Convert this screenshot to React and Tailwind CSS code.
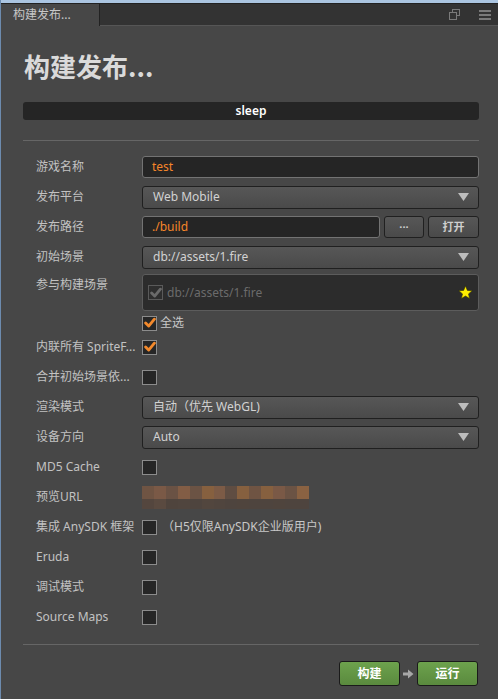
import React from "react";

const font = { fontFamily: '"Noto Sans", "Noto Sans CJK SC", sans-serif' };

function Check({ checked, disabled }) {
  return (
    <div
      className={
        "w-[15px] h-[15px] border flex items-center justify-center shrink-0 " +
        (disabled ? "border-[#5a5a5a] bg-[#2e2e2e]" : "border-[#8c8c8c] bg-[#262626]")
      }
    >
      {checked && (
        <svg width="12" height="12" viewBox="0 0 11 11">
          <path
            d="M1.5 5.5 L4.3 8.3 L9.5 2"
            fill="none"
            stroke={disabled ? "#6a6a6a" : "#f2892c"}
            strokeWidth="2.6"
            strokeLinecap="round"
            strokeLinejoin="round"
          />
        </svg>
      )}
    </div>
  );
}

function Row({ label, children }) {
  return (
    <div className="flex items-center h-[30px]">
      <div className="w-[119px] pl-[13px] text-[12px] text-[#c2c2c2] whitespace-nowrap">{label}</div>
      <div className="flex-1 flex items-center">{children}</div>
    </div>
  );
}

function Select({ value }) {
  return (
    <div className="flex-1 h-[23px] rounded-[3px] border border-[#202020] bg-gradient-to-b from-[#575757] to-[#4a4a4a] flex items-center pl-[10px] pr-[9px] text-[12px] text-[#d2d2d2]">
      <span className="flex-1">{value}</span>
      <svg width="11" height="8" viewBox="0 0 11 8">
        <path d="M0 0 H11 L5.5 8 Z" fill="#bdbdbd" />
      </svg>
    </div>
  );
}

function Input({ value, className = "flex-1" }) {
  return (
    <div className={className + " h-[22px] rounded-[3px] border border-[#737373] bg-[#252525] flex items-center pl-[9px] text-[12px] text-[#f5852a]"}>
      {value}
    </div>
  );
}

const top = ["#6f5443", "#7a5946", "#6a5244", "#825d45", "#6b5344", "#86603f", "#7c5b46", "#5f4d42", "#86603f", "#6f5443", "#86603f", "#7a5946", "#6b5344", "#8a6242"];
const bottom = ["#54463e", "#5a4a40", "#4f443d", "#50453e", "#4e443e", "#52463e", "#50453e", "#4e443e", "#4f443d", "#4e443e", "#4e443e", "#4f443d", "#4e443e", "#4e443e"];

export default function App() {
  return (
    <div className="w-[498px] h-[699px] bg-[#474747] flex flex-col overflow-hidden border-l border-[#6d8bae]" style={font}>
      <div className="h-[3px] bg-[#abc5e1] shrink-0" />
      <div className="h-[23px] bg-[#333333] flex items-stretch shrink-0 border-t border-[#222]">
        <div className="w-[99px] bg-[#474747] border-r border-[#222] text-[12px] text-[#c8c8c8] pl-[12px] flex items-center">
          构建发布...
        </div>
        <div className="flex-1 border-b border-[#565656] flex items-center justify-end pr-[7px] gap-[19px]">
          <svg width="11" height="11" viewBox="0 0 11 11">
            <rect x="3.5" y="0.5" width="7" height="6" fill="none" stroke="#7a7a7a" />
            <rect x="0.5" y="3.5" width="7" height="7" fill="#333" stroke="#7a7a7a" />
          </svg>
          <svg width="12" height="10" viewBox="0 0 12 10">
            <rect x="0" y="0" width="12" height="2" fill="#7a7a7a" />
            <rect x="0" y="4" width="12" height="2" fill="#7a7a7a" />
            <rect x="0" y="8" width="12" height="2" fill="#7a7a7a" />
          </svg>
        </div>
      </div>

      <div className="pl-[22px] pr-[19px] flex flex-col">
        <div className="mt-[25px] h-[30px] leading-[30px] text-[26px] font-bold text-[#dadada] pl-[1px]" style={{ fontFamily: '"Noto Sans CJK SC", sans-serif' }}>
          构建发布...
        </div>
        <div className="mt-[21px] h-[18px] rounded-[3px] bg-[#252525] flex items-center justify-center text-[12px] font-semibold text-white">
          sleep
        </div>
        <div className="mt-[20px] h-px bg-[#666]" />

        <div className="mt-[11px] flex flex-col">
          <Row label="游戏名称">
            <Input value="test" />
          </Row>
          <Row label="发布平台">
            <Select value="Web Mobile" />
          </Row>
          <Row label="发布路径">
            <Input value="./build" className="w-[238px]" />
            <div className="ml-[4px] w-[40px] h-[22px] rounded-[3px] border border-[#202020] bg-gradient-to-b from-[#575757] to-[#4a4a4a] flex items-center justify-center text-[11px] font-bold text-[#cfcfcf]">
              ···
            </div>
            <div className="ml-[4px] w-[51px] h-[22px] rounded-[3px] border border-[#202020] bg-gradient-to-b from-[#575757] to-[#4a4a4a] flex items-center justify-center text-[11px] font-bold text-[#cfcfcf]">
              打开
            </div>
          </Row>
          <Row label="初始场景">
            <Select value="db://assets/1.fire" />
          </Row>

          <div className="flex h-[60px]">
            <div className="w-[119px] pl-[13px] pt-[4px] text-[12px] text-[#c2c2c2] leading-[18px]">参与构建场景</div>
            <div className="flex-1 flex flex-col">
              <div className="mt-[2px] h-[37px] rounded-[3px] border border-[#5c5c5c] bg-[#2c2c2c] flex items-center pl-[5px] pr-[5px]">
                <Check checked disabled />
                <span className="ml-[4px] text-[12px] text-[#6b6b6b] flex-1">db://assets/1.fire</span>
                <svg width="15" height="15" viewBox="0 0 24 24">
                  <path d="M12 1.5 L15 8.6 L22.6 9.2 L16.8 14.2 L18.6 21.7 L12 17.7 L5.4 21.7 L7.2 14.2 L1.4 9.2 L9 8.6 Z" fill="#ffee00" stroke="#3a3a00" strokeWidth="1" />
                </svg>
              </div>
              <div className="mt-[3px] flex items-center">
                <Check checked />
                <span className="ml-[3px] text-[12px] text-[#c8c8c8]">全选</span>
              </div>
            </div>
          </div>

          <Row label="内联所有 SpriteF...">
            <Check checked />
          </Row>
          <Row label="合并初始场景依...">
            <Check />
          </Row>
          <Row label="渲染模式">
            <Select value="自动（优先 WebGL)" />
          </Row>
          <Row label="设备方向">
            <Select value="Auto" />
          </Row>
          <Row label="MD5 Cache">
            <Check />
          </Row>
          <Row label="预览URL">
            <div className="w-[167px] h-[23px] flex flex-col">
              <div className="flex h-[13px]">
                {top.map((c, i) => (
                  <div key={i} className="flex-1" style={{ backgroundColor: c }} />
                ))}
              </div>
              <div className="flex h-[10px]">
                {bottom.map((c, i) => (
                  <div key={i} className="flex-1" style={{ backgroundColor: c }} />
                ))}
              </div>
            </div>
          </Row>
          <Row label="集成 AnySDK 框架">
            <Check />
            <span className="ml-[5px] text-[12px] text-[#c8c8c8]">（H5仅限AnySDK企业版用户)</span>
          </Row>
          <Row label="Eruda">
            <Check />
          </Row>
          <Row label="调试模式">
            <Check />
          </Row>
          <Row label="Source Maps">
            <Check />
          </Row>
        </div>

        <div className="mt-[12px] h-px bg-[#666]" />

        <div className="mt-[16px] flex items-center justify-end pr-[1px]">
          <div className="w-[61px] h-[25px] rounded-[3px] border border-[#1a1a1a] bg-gradient-to-b from-[#6da24d] to-[#5a8a3e] flex items-center justify-center text-[12px] font-bold text-white">
            构建
          </div>
          <svg className="mx-[3px]" width="11" height="10" viewBox="0 0 11 10">
            <path d="M0 3.5 H5 V0.5 L10.5 5 L5 9.5 V6.5 H0 Z" fill="#a8a8a8" />
          </svg>
          <div className="w-[61px] h-[25px] rounded-[3px] border border-[#1a1a1a] bg-gradient-to-b from-[#6da24d] to-[#5a8a3e] flex items-center justify-center text-[12px] font-bold text-white">
            运行
          </div>
        </div>
      </div>
    </div>
  );
}
